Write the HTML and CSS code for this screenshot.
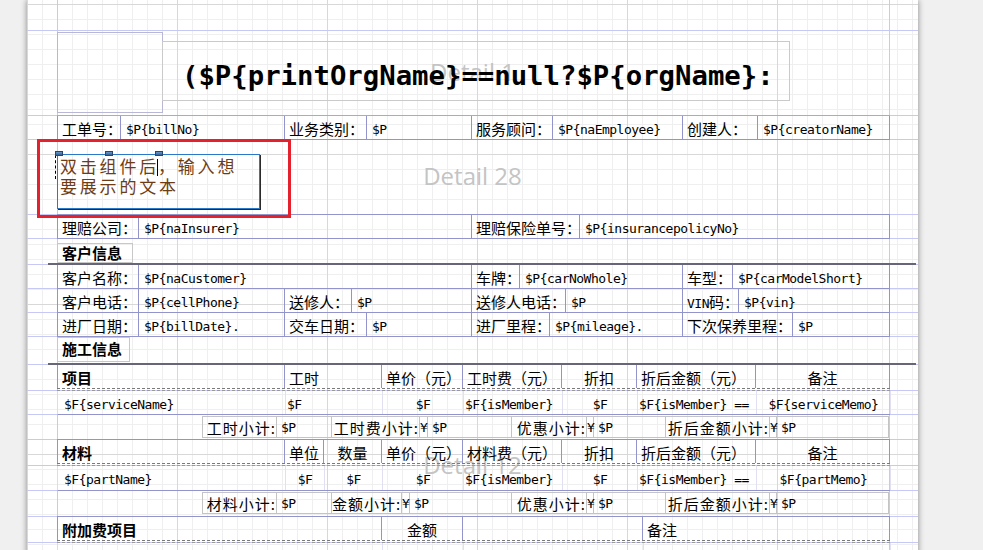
FILE: index.html
```html
<!DOCTYPE html>
<html lang="zh">
<head>
  <meta charset="UTF-8">
  <title>报表设计 - 工单</title>
  <link rel="stylesheet" href="styles.css">
</head>
<body>

  <div class="page">
    <!-- band watermarks -->
    <span class="wm wm-1">Detail 1</span>
    <span class="wm wm-28">Detail 28</span>
    <span class="wm wm-12">Detail 12</span>
    <div class="pick"></div>

    <div class="band h31"></div>

    <!-- Title -->
    <div class="band h85">
      <div class="inner title-inner">
        <div class="logo-box"></div>
        <div class="title-box">($P{printOrgName}==null?$P{orgName}:</div>
      </div>
    </div>

    <div class="band h24">
      <div class="row r-order">
        <div class="c lbl">工单号：</div>
        <div class="c val">$P{billNo}</div>
        <div class="c lbl">业务类别：</div>
        <div class="c val">$P</div>
        <div class="c lbl">服务顾问：</div>
        <div class="c val">$P{naEmployee}</div>
        <div class="c lbl">创建人：</div>
        <div class="c val">$P{creatorName}</div>
      </div>
    </div>

    <!-- Detail 28 : free text box -->
    <div class="band h75">
      <div class="inner text-inner">
        <div class="textbox">
          <span class="sel-line"></span>
          <span class="handle hd-1"></span>
          <span class="handle hd-2"></span>
          <span class="handle hd-3"></span>
          <p>双击组件后<span class="caret"></span>，输入想要展示的文本</p>
        </div>
      </div>
    </div>

    <div class="band h24">
      <div class="row r-claim">
        <div class="c lbl">理赔公司：</div>
        <div class="c val">$P{naInsurer}</div>
        <div class="c lbl">理赔保险单号：</div>
        <div class="c val">$P{insurancepolicyNo}</div>
      </div>
    </div>

    <!-- 客户信息 -->
    <div class="band h26 sec">
      <div class="sec-box w76">客户信息</div>
      <div class="rule"></div>
    </div>

    <div class="band h24">
      <div class="row r-cust">
        <div class="c lbl">客户名称：</div>
        <div class="c val">$P{naCustomer}</div>
        <div class="c lbl">车牌：</div>
        <div class="c val">$P{carNoWhole}</div>
        <div class="c lbl">车型：</div>
        <div class="c val">$P{carModelShort}</div>
      </div>
    </div>

    <div class="band h24">
      <div class="row r-phone">
        <div class="c lbl">客户电话：</div>
        <div class="c val">$P{cellPhone}</div>
        <div class="c lbl">送修人：</div>
        <div class="c val">$P</div>
        <div class="c lbl">送修人电话：</div>
        <div class="c val">$P</div>
        <div class="c lbl"><span class="hw">VIN</span>码：</div>
        <div class="c val">$P{vin}</div>
      </div>
    </div>

    <div class="band h24">
      <div class="row r-date">
        <div class="c lbl">进厂日期：</div>
        <div class="c val">$P{billDate}.</div>
        <div class="c lbl">交车日期：</div>
        <div class="c val">$P</div>
        <div class="c lbl">进厂里程：</div>
        <div class="c val">$P{mileage}.</div>
        <div class="c lbl">下次保养里程：</div>
        <div class="c val">$P</div>
      </div>
    </div>

    <!-- 施工信息 -->
    <div class="band h28 sec">
      <div class="sec-box w73">施工信息</div>
      <div class="rule"></div>
    </div>

    <div class="band h26 head">
      <div class="row r-items">
        <div class="c lbl bold">项目</div>
        <div class="c lbl">工时</div>
        <div class="c lbl">单价（元）</div>
        <div class="c lbl">工时费（元）</div>
        <div class="c lbl ctr">折扣</div>
        <div class="c lbl">折后金额（元）</div>
        <div class="c lbl ctr">备注</div>
      </div>
      <div class="dash"></div>
    </div>

    <div class="band h24">
      <div class="row det r-items">
        <div class="c val">$F{serviceName}</div>
        <div class="c val tight">$F</div>
        <div class="c val ctr">$F</div>
        <div class="c val tight">$F{isMember}</div>
        <div class="c val ctr">$F</div>
        <div class="c val tight">$F{isMember} ==</div>
        <div class="c val ctr">$F{serviceMemo}</div>
      </div>
    </div>

    <div class="band h25">
      <div class="row sub r-sub1">
        <div></div>
        <div class="bx first lbl sl">工时小计:</div>
        <div class="bx val">$P</div>
        <div class="bx lbl sl">工时费小计:</div>
        <div class="bx val yen">¥</div>
        <div class="bx val">$P</div>
        <div class="bx lbl sl">优惠小计:</div>
        <div class="bx val yen">¥</div>
        <div class="bx val">$P</div>
        <div class="bx lbl sl">折后金额小计:</div>
        <div class="bx val yen">¥</div>
        <div class="bx val">$P</div>
      </div>
    </div>

    <div class="band h26 head">
      <div class="row r-mat">
        <div class="c lbl bold">材料</div>
        <div class="c lbl ctr">单位</div>
        <div class="c lbl ctr">数量</div>
        <div class="c lbl">单价（元）</div>
        <div class="c lbl">材料费（元）</div>
        <div class="c lbl ctr">折扣</div>
        <div class="c lbl">折后金额（元）</div>
        <div class="c lbl ctr">备注</div>
      </div>
      <div class="dash"></div>
    </div>

    <div class="band h25">
      <div class="row det r-mat">
        <div class="c val">$F{partName}</div>
        <div class="c val ctr">$F</div>
        <div class="c val ctr">$F</div>
        <div class="c val ctr">$F</div>
        <div class="c val tight">$F{isMember}</div>
        <div class="c val ctr">$F</div>
        <div class="c val tight">$F{isMember} ==</div>
        <div class="c val ctr">$F{partMemo}</div>
      </div>
    </div>

    <div class="band h26">
      <div class="row sub r-sub2">
        <div></div>
        <div class="bx first lbl sl">材料小计:</div>
        <div class="bx val">$P</div>
        <div class="bx lbl sl">金额小计:</div>
        <div class="bx val yen">¥</div>
        <div class="bx val">$P</div>
        <div class="bx lbl sl">优惠小计:</div>
        <div class="bx val yen">¥</div>
        <div class="bx val">$P</div>
        <div class="bx lbl sl">折后金额小计:</div>
        <div class="bx val yen">¥</div>
        <div class="bx val">$P</div>
      </div>
    </div>

    <div class="band h26 head">
      <div class="row r-extra">
        <div class="c lbl bold">附加费项目</div>
        <div class="c lbl ctr">金额</div>
        <div class="c"></div>
        <div class="c lbl">备注</div>
      </div>
      <div class="dash"></div>
    </div>

    <div class="band h24">
      <div class="row det r-extra">
        <div class="c val">$F{extraName}</div>
        <div class="c val ctr">$F{amount}</div>
        <div class="c"></div>
        <div class="c val">$F{remark}</div>
      </div>
    </div>
  </div>

</body>
</html>
```

FILE: styles.css
```css
:root {
  --band-line: #c8c8f6;
  --cell-line: #9494cc;
  --box-line: #c4c4c4;
}
* { margin: 0; padding: 0; box-sizing: border-box; }
body {
  background: #f0f0f0;
  width: 983px;
  height: 550px;
  overflow: hidden;
  font-family: "Noto Sans CJK SC", sans-serif;
  color: #000;
}

/* the report sheet with its design grid */
.page {
  position: relative;
  z-index: 0;
  margin-left: 27px;
  width: 891px;
  height: 570px;
  background-color: #fff;
  background-image:
    linear-gradient(to right, transparent 30px, var(--band-line) 30px, var(--band-line) 31px, transparent 31px, transparent 862px, var(--band-line) 862px, var(--band-line) 863px, transparent 863px),
    linear-gradient(to right, #d8d8d8 1px, transparent 1px),
    linear-gradient(to bottom, #d8d8d8 1px, transparent 1px),
    linear-gradient(to right, #efefef 1px, transparent 1px),
    linear-gradient(to bottom, #efefef 1px, transparent 1px);
  background-size: 100% 100%, 150px 150px, 150px 150px, 15px 15px, 15px 15px;
  background-position: 0 0, 0 4px, 0 4px, 0 4px, 0 4px;
  box-shadow: 0 0 6px rgba(0, 0, 0, 0.45);
}

.wm {
  position: absolute;
  z-index: -1;
  left: 0;
  right: 0;
  text-align: center;
  font-family: "Open Sans", sans-serif;
  font-size: 24px;
  line-height: 24px;
  color: #c4c4c4;
}
.wm-1 { top: 60px; }
.wm-28 { top: 164px; }
.wm-12 { top: 453px; }

.pick {
  position: absolute;
  left: 10px;
  top: 139px;
  width: 254px;
  height: 79px;
  border: 3px solid #e5212d;
}

/* bands */
.band {
  display: flex;
  flex-direction: column;
  background: linear-gradient(var(--band-line), var(--band-line)) left bottom / 100% 1px no-repeat;
}
.h24 { height: 24px; }
.h25 { height: 25px; }
.h26 { height: 26px; }
.h28 { height: 28px; }
.h31 { height: 31px; }
.h75 { height: 75px; }
.h85 { height: 85px; }

.inner {
  margin-left: 30px;
  width: 833px;
  height: 100%;
  border-bottom: 1px solid #a8a8d8;
}

.title-inner { display: flex; align-items: flex-start; }
.logo-box {
  margin-top: 1px;
  width: 106px;
  height: 81px;
  border: 1px solid #b8b8d6;
}
.title-box {
  margin: 10px 0 0 -1px;
  width: 628px;
  height: 60px;
  border: 1px solid #cacaca;
  padding: 20px 0 0 19px;
  font-family: "DejaVu Sans Mono", monospace;
  font-weight: 700;
  font-size: 27.3px;
  line-height: 28px;
  white-space: nowrap;
}

/* free text box, selected */
.text-inner { border-bottom-color: var(--cell-line); padding-top: 14px; }
.textbox {
  position: relative;
  width: 203px;
  height: 55px;
  border: 1px solid #2a78c8;
  box-shadow: 1px 1px 0 #2b2b2b;
  padding: 1px 16px 0 2px;
}
.textbox p {
  font-size: 17px;
  line-height: 20px;
  letter-spacing: 2.8px;
  color: #6e3c14;
}
.caret {
  display: inline-block;
  width: 0;
  height: 17px;
  border-left: 1px solid #000;
  vertical-align: -3px;
  margin-left: -2px;
}
.sel-line {
  position: absolute;
  left: -3px;
  top: 0;
  height: 24px;
  border-left: 1px dashed #000;
}
.handle {
  position: absolute;
  top: -4px;
  width: 8px;
  height: 5px;
  background: linear-gradient(#6c98c8, #2f5f96);
  border: 1px solid #27466e;
}
.hd-1 { left: -3px; }
.hd-2 { left: 47px; }
.hd-3 { left: 97px; }

/* table rows */
.row {
  display: grid;
  margin-left: 30px;
  width: 833px;
  height: 100%;
  border-left: 1px solid var(--cell-line);
  border-bottom: 1px solid var(--cell-line);
}
.r-order { grid-template-columns: 63px 164px 82px 105px 81px 130px 75px 132px; }
.r-claim { grid-template-columns: 81px 333px 108px 310px; }
.r-cust  { grid-template-columns: 81px 333px 48px 163px 50px 157px; }
.r-phone { grid-template-columns: 81px 146px 67px 120px 94px 117px 56px 151px; }
.r-date  { grid-template-columns: 81px 146px 82px 105px 78px 133px 110px 97px; }
.r-items { grid-template-columns: 227px 97px 81px 99px 75px 119px 134px; }
.r-mat   { grid-template-columns: 227px 39px 58px 81px 99px 75px 119px 134px; }
.r-extra { grid-template-columns: 324px 81px 180px 247px; }
.r-sub1  { grid-template-columns: 145px 75px 55px 88px 8px 84px 75px 7px 72px 104px 7px 112px; }
.r-sub2  { grid-template-columns: 145px 75px 55px 70px 8px 102px 75px 7px 72px 104px 7px 112px; }

.c {
  border-right: 1px solid var(--cell-line);
  padding: 3px 0 0 4px;
  line-height: 20px;
  white-space: nowrap;
  overflow: hidden;
}
.lbl { font-family: "Noto Sans CJK SC", sans-serif; font-size: 15px; }
.val {
  font-family: "DejaVu Sans Mono", monospace;
  font-size: 13px;
  letter-spacing: -0.5px;
  padding-top: 4px;
  padding-left: 5px;
}
.hw {
  font-family: "DejaVu Sans Mono", monospace;
  font-size: 13px;
  letter-spacing: -0.5px;
}
.bold { font-weight: 700; }
.ctr { text-align: center; padding-left: 0; }
.tight { padding-left: 1px; }

.head { height: 26px; }
.head .row { height: 23px; border-bottom: none; }
.dash {
  margin-left: 30px;
  width: 833px;
  height: 3px;
  border-top: 1px dashed #7a7a7a;
  border-bottom: 1px dashed #9a9a9a;
}

.det { border-left-color: #dcdcf0; padding-left: 1px; }
.det .c { border-right-color: #e0e0f2; }

.sub { border-left: none; align-items: start; }
.bx {
  margin-top: 1px;
  height: 22px;
  border: 1px solid var(--box-line);
  border-left: none;
  line-height: 20px;
  white-space: nowrap;
  padding-top: 1px;
}
.bx.first { border-left: 1px solid var(--box-line); }
.bx.val { padding-left: 4px; padding-top: 1px; }
.sl { text-align: right; letter-spacing: 1px; padding-right: 0; }
.yen { padding: 1px 0 0 0 !important; text-align: center; letter-spacing: 0; }

/* section headers */
.sec { justify-content: space-between; }
.sec-box {
  margin: 4px 0 0 30px;
  height: 20px;
  border: 1px solid #c8c8c8;
  padding-left: 4px;
  font-size: 15px;
  font-weight: 700;
  line-height: 17px;
}
.w76 { width: 76px; }
.w73 { width: 73px; margin-top: 0; height: 25px; line-height: 22px; }
.rule {
  margin-left: 21px;
  width: 868px;
  height: 2px;
  background: #666678;
}
```
